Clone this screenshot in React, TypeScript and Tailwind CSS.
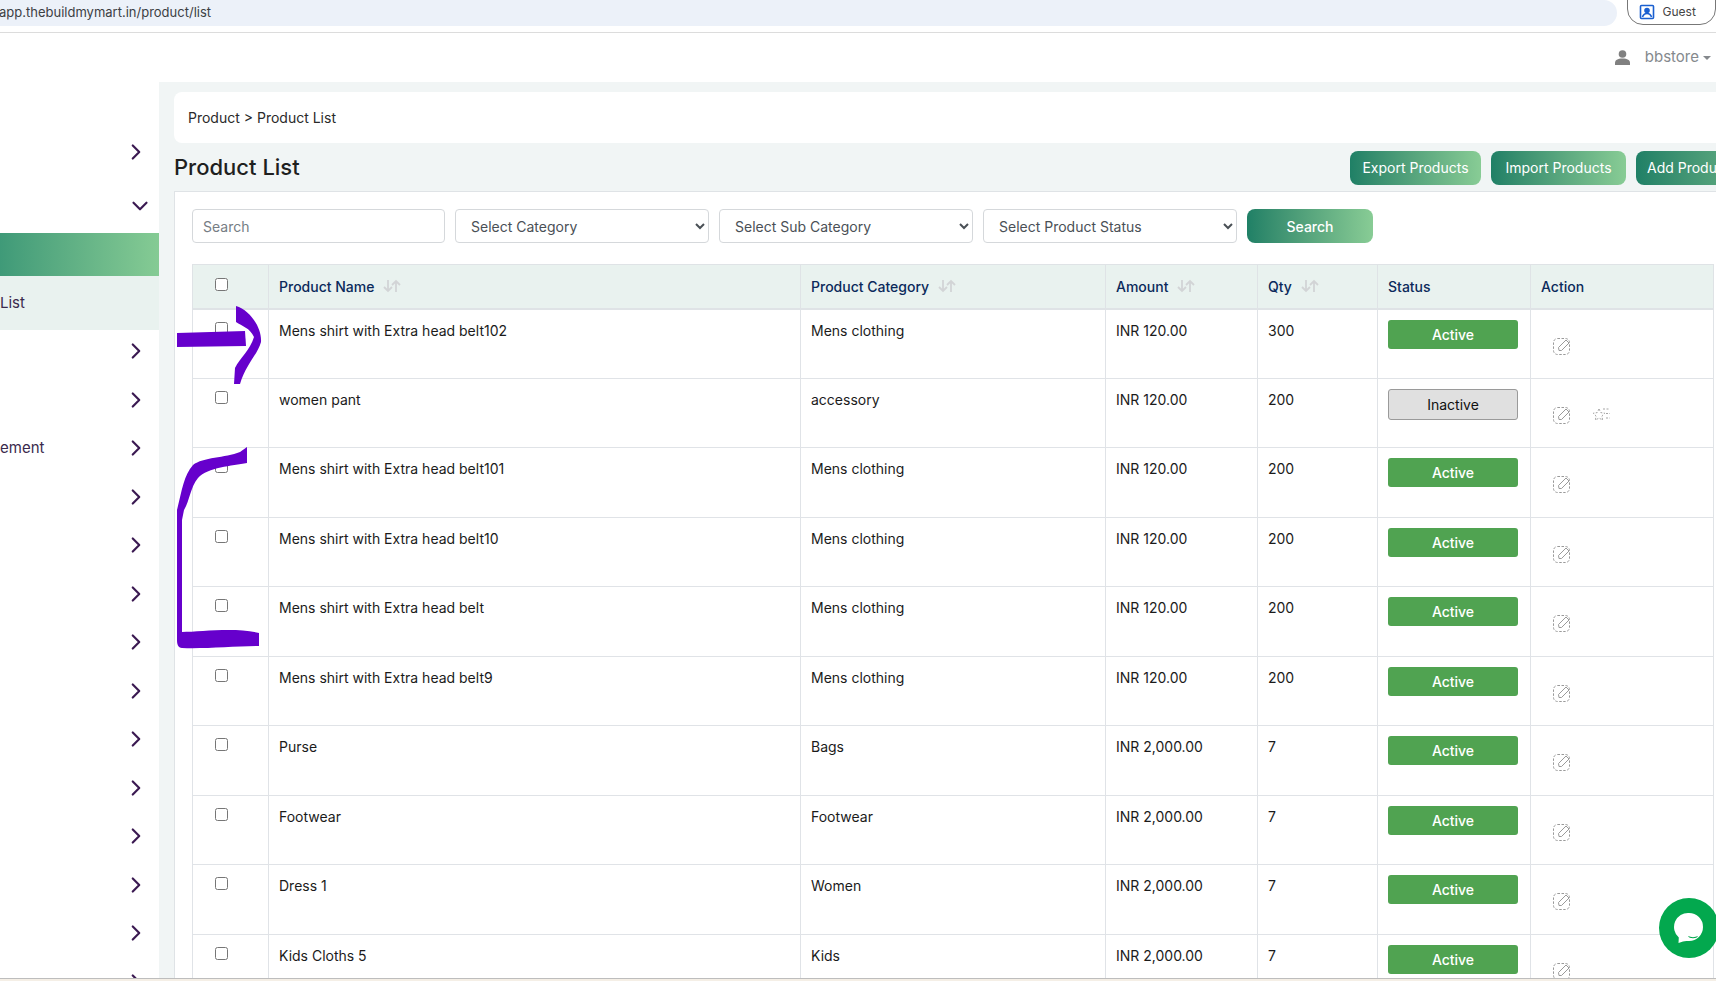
import { ChevronDown, ChevronRight } from "lucide-react"

const products = [
  { name: "Mens shirt with Extra head belt102", category: "Mens clothing", amount: "INR 120.00", qty: "300", active: true },
  { name: "women pant", category: "accessory", amount: "INR 120.00", qty: "200", active: false },
  { name: "Mens shirt with Extra head belt101", category: "Mens clothing", amount: "INR 120.00", qty: "200", active: true },
  { name: "Mens shirt with Extra head belt10", category: "Mens clothing", amount: "INR 120.00", qty: "200", active: true },
  { name: "Mens shirt with Extra head belt", category: "Mens clothing", amount: "INR 120.00", qty: "200", active: true },
  { name: "Mens shirt with Extra head belt9", category: "Mens clothing", amount: "INR 120.00", qty: "200", active: true },
  { name: "Purse", category: "Bags", amount: "INR 2,000.00", qty: "7", active: true },
  { name: "Footwear", category: "Footwear", amount: "INR 2,000.00", qty: "7", active: true },
  { name: "Dress 1", category: "Women", amount: "INR 2,000.00", qty: "7", active: true },
  { name: "Kids Cloths 5", category: "Kids", amount: "INR 2,000.00", qty: "7", active: true },
]

const gradient = "bg-gradient-to-r from-[#1f8066] to-[#88cc95]"

function SortArrows() {
  return (
    <svg width="20" height="16" viewBox="0 0 20 16" fill="none" stroke="#d2d4d6" strokeWidth="1.8" className="ml-2 shrink-0">
      <path d="M6 2v11M2 9l4 4 4-4" />
      <path d="M14 14V3M10 7l4-4 4 4" />
    </svg>
  )
}

function EditIcon() {
  return (
    <svg width="20" height="20" viewBox="0 0 20 20" fill="none" stroke="#9a9a9a" strokeWidth="1">
      <rect x="1.5" y="2.5" width="16" height="16" rx="4" strokeDasharray="2.5 1.5" />
      <path d="M7 14.5l-.5-3L14 4l3 3-7.500 7.500z" fill="#fff" />
    </svg>
  )
}

function StarIcon() {
  return (
    <svg width="20" height="18" viewBox="0 0 20 18" fill="none" stroke="#a5a5a5" strokeWidth="1" strokeDasharray="2 1.500">
      <path d="M7 3l1.800 3.600 4 .6-2.900 2.800.7 4L7 12.100 3.400 14l.7-4L1.200 7.200l4-.6z" />
      <path d="M11 3h7M14 7.500h4M14 12h4" />
    </svg>
  )
}

function NavRow({ label }: { label?: string }) {
  return (
    <div className="h-[42px] flex items-center justify-between pr-[10px] shrink-0">
      <span className="text-[15px] text-[#3b2a4d]">{label}</span>
      <ChevronRight size={26} strokeWidth={2} className="text-[#3b1a52]" />
    </div>
  )
}

function Sidebar() {
  return (
    <div className="w-[159px] shrink-0 bg-white pt-[49px] flex flex-col overflow-hidden">
      <NavRow />
      <div className="h-[42px] mt-3 flex items-center justify-end pr-[6px] shrink-0">
        <ChevronDown size={26} strokeWidth={2} className="text-[#3b1a52]" />
      </div>
      <div className={`h-[43px] mt-1.5 shrink-0 bg-gradient-to-r from-[#3f9a78] to-[#85cb94]`} />
      <div className="h-[54px] bg-[#e9f2ef] flex items-center text-[15px] text-[#3b2a4d] shrink-0">List</div>
      <div className="flex flex-col gap-[6.500px]">
        <NavRow />
        <NavRow />
        <NavRow label="ement" />
        {[1, 2, 3, 4, 5, 6, 7, 8, 9, 10, 11].map((i) => (
          <NavRow key={i} />
        ))}
      </div>
    </div>
  )
}

function Filters() {
  return (
    <div className="flex gap-[10px] mb-[21px]">
      <input
        placeholder="Search"
        className="w-[253px] h-[34px] rounded border border-[#d5d8db] px-[10px] text-[14px] placeholder:text-[#767d84] bg-white outline-none"
      />
      {["Select Category", "Select Sub Category", "Select Product Status"].map((label) => (
        <select
          key={label}
          className="w-[254px] h-[34px] rounded border border-[#d5d8db] pl-[11px] text-[14px] text-[#4a5056] bg-white outline-none"
        >
          <option>{label}</option>
        </select>
      ))}
      <button className={`w-[126px] h-[34px] rounded-lg text-[14px] font-medium text-white ${gradient}`}>Search</button>
    </div>
  )
}

function Table() {
  const th = "border border-[#dfe3e6] border-b-2 px-[10px] text-left text-[14px] font-medium text-[#0b2a5b]"
  const td = "border border-[#e0e3e7] px-[10px] pt-[10px] align-top text-[14px] text-[#1b1b1b]"
  return (
    <table className="w-[1521px] table-fixed border-collapse">
      <colgroup>
        <col className="w-[76px]" />
        <col className="w-[532px]" />
        <col className="w-[305px]" />
        <col className="w-[152px]" />
        <col className="w-[120px]" />
        <col className="w-[153px]" />
        <col className="w-[183px]" />
      </colgroup>
      <thead>
        <tr className="h-[44px] bg-[#e9f2ef]">
          <th className={th}>
            <input type="checkbox" className="block ml-[12px] -mt-[4px] w-[13px] h-[13px]" />
          </th>
          {["Product Name", "Product Category", "Amount", "Qty"].map((h) => (
            <th key={h} className={th}>
              <div className="flex items-center">
                {h}
                <SortArrows />
              </div>
            </th>
          ))}
          <th className={th}>Status</th>
          <th className={th}>Action</th>
        </tr>
      </thead>
      <tbody>
        {products.map((p, i) => (
          <tr key={i} className="h-[69.500px] bg-white">
            <td className={td}>
              <input type="checkbox" className="block ml-[12px] mt-[2px] w-[13px] h-[13px]" />
            </td>
            <td className={td}>{p.name}</td>
            <td className={td}>{p.category}</td>
            <td className={td}>{p.amount}</td>
            <td className={td}>{p.qty}</td>
            <td className={td}>
              {p.active ? (
                <div className="w-[130px] h-[29px] rounded-[3px] bg-[#50a351] text-white font-medium flex items-center justify-center">
                  Active
                </div>
              ) : (
                <div className="w-[130px] h-[31px] rounded-[3px] bg-[#e0e0e0] border border-[#9a9a9a] text-[#111] flex items-center justify-center">
                  Inactive
                </div>
              )}
            </td>
            <td className={td}>
              <div className="flex items-center gap-5 pl-[11px] pt-[16px]">
                <EditIcon />
                {!p.active && <StarIcon />}
              </div>
            </td>
          </tr>
        ))}
      </tbody>
    </table>
  )
}

function Marker() {
  // purple pen marks someone drew on the screenshot
  return (
    <svg width="1716" height="981" className="absolute inset-0 pointer-events-none">
      <g fill="#6600cc">
        <path d="M177 333 L245 331 L246 346 L177 347 Z" />
        <path d="M236 306 C250 310 262 328 261 342 C258 354 246 364 240 384 L234 384 L235 368 C240 358 250 350 254 337 C250 328 242 326 236 322 Z" />
        <path d="M247 447 L247 463 C232 466 208 467 198 478 C190 488 190 500 184 510 L182 520 L182 632 C200 632 235 627 259 633 L259 646 C235 646 205 649 182 648 C178 648 177 644 177 640 L177 510 C182 490 184 475 193 465 C203 457 225 458 240 452 Z" />
      </g>
    </svg>
  )
}

export default function App() {
  return (
    <div className="relative w-[1716px] h-[981px] overflow-hidden bg-white flex flex-col font-['Inter','Liberation_Sans',sans-serif]">
      {/* browser chrome */}
      <div className="h-[33px] shrink-0 border-b border-[#dcdcdc] flex items-start">
        <div className="w-[1628px] h-[26px] bg-[#ecf1f9] rounded-r-full flex items-center text-[13px] text-[#3c4043] -ml-[1px]">
          app.thebuildmymart.in/product/list
        </div>
        <div className="ml-[10px] -mt-[8px] w-[90px] h-[33px] border border-[#777] rounded-b-[16px] rounded-t-none flex items-center pl-[11px] pt-[6px] text-[12px] text-[#444]">
          <svg width="16" height="16" viewBox="0 0 16 16" fill="none" stroke="#1a5fd0" strokeWidth="1.600" className="mr-[8px]">
            <rect x="1.500" y="1.500" width="13" height="13" rx="1" />
            <circle cx="8" cy="6.500" r="2" fill="#1a5fd0" />
            <path d="M3.500 13c.8-2.500 2.500-3.500 4.500-3.500s3.700 1 4.500 3.500" />
          </svg>
          Guest
        </div>
      </div>

      {/* app header */}
      <div className="h-[49px] shrink-0 flex items-center justify-end pr-[5px]">
        <svg width="15" height="15" viewBox="0 0 15 15" fill="#808080" className="mr-[15px]">
          <circle cx="7.500" cy="4" r="3.800" />
          <path d="M0 15v-2c0-3 2.500-4.500 7.500-4.500S15 10 15 13v2z" />
        </svg>
        <span className="text-[15px] text-[#85898d]">bbstore</span>
        <span className="ml-[4px] w-0 h-0 border-x-[4px] border-x-transparent border-t-[4px] border-t-[#85898d]" />
      </div>

      <div className="flex flex-1 min-h-0">
        <Sidebar />
        <div className="flex-1 min-w-0 bg-[#f1f5f5] pt-[10px] pl-[15px] overflow-hidden">
          <div className="h-[51px] bg-white rounded-l-lg flex items-center pl-[14px] text-[14px] text-[#2a2a2a]">
            Product &gt; Product List
          </div>
          <div className="h-[48px] flex items-center justify-between">
            <h1 className="text-[22px] font-medium text-[#1f1f1f]">Product List</h1>
            <div className="flex gap-[10px] -mr-[100px] pt-[7px] pb-[6px]">
              <button className={`w-[131px] h-[34px] rounded-lg text-[14px] text-white ${gradient}`}>Export Products</button>
              <button className={`w-[135px] h-[34px] rounded-lg text-[14px] text-white ${gradient}`}>Import Products</button>
              <button className={`w-[180px] h-[34px] rounded-lg text-[14px] text-white pl-[11px] text-left ${gradient}`}>Add Product</button>
            </div>
          </div>
          <div className="bg-white border border-[#dfe3e6] border-r-0 pt-[17px] pl-[17px] h-[800px]">
            <Filters />
            <Table />
          </div>
        </div>
      </div>

      <div className="h-[3px] shrink-0 border-t border-[#bdbdbd] bg-[#f5efe6]" />

      <Marker />

      <div className="absolute left-[1659px] top-[898px] w-[60px] h-[60px] rounded-full bg-[#03a84e] flex items-center justify-center">
        <svg width="30" height="32" viewBox="0 0 30 32">
          <path d="M15 1a14 14 0 0 1 0 28c-2 0-4-.4-6 .6L4.500 31l.3-5.500A14 14 0 0 1 15 1z" fill="#fff" />
          <path d="M14 24c3 1.500 7 1.500 10 0-1 3-9 3-10 0z" fill="#03a84e" />
        </svg>
      </div>
    </div>
  )
}
